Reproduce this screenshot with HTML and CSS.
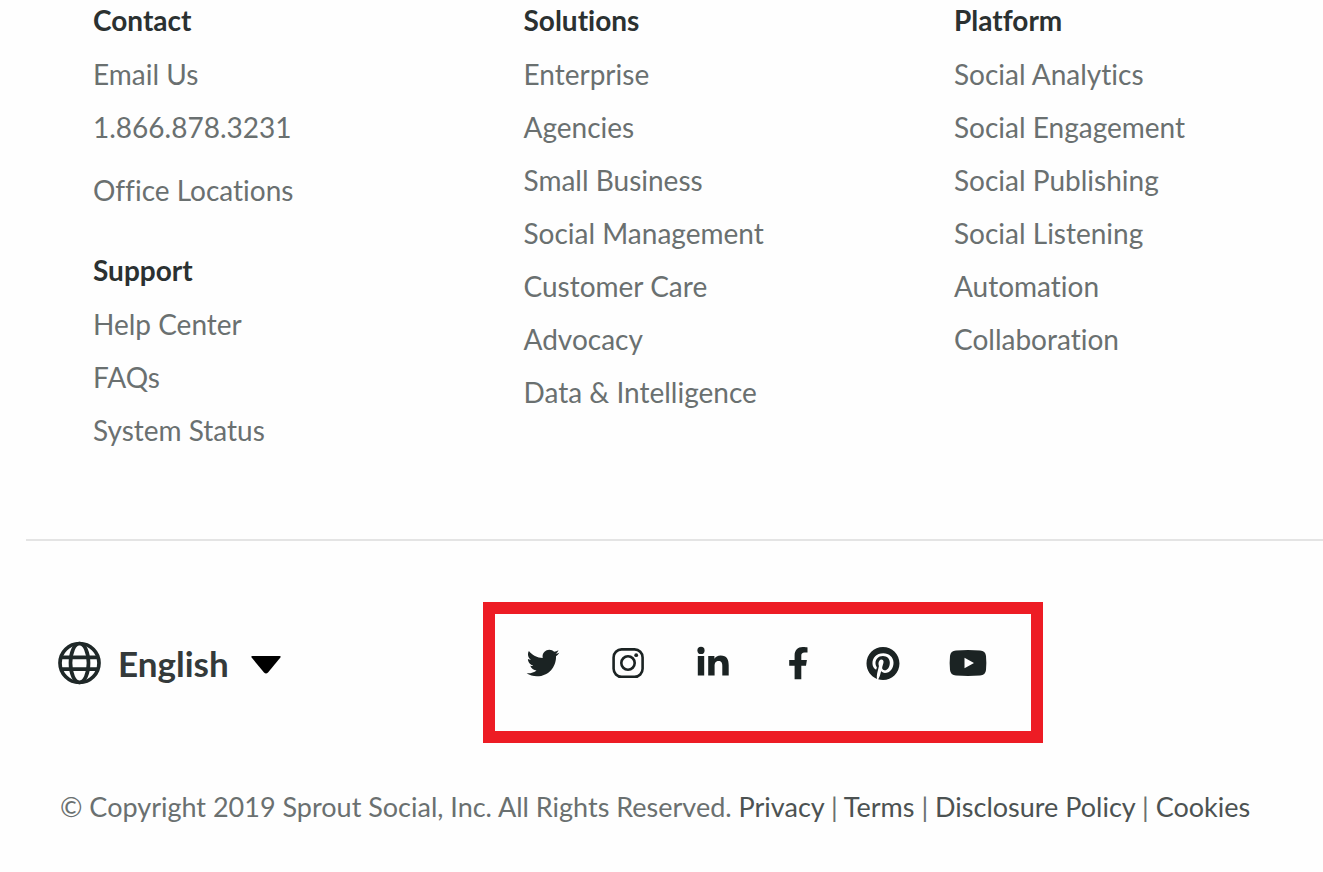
FILE: index.html
```html
<!DOCTYPE html>
<html lang="en">
<head>
<meta charset="utf-8">
<meta name="viewport" content="width=device-width, initial-scale=1">
<title>Sprout Social</title>
<link rel="stylesheet" href="styles.css">
</head>
<body>
<footer class="footer">
  <div class="columns">
    <div class="column">
      <h2 class="heading">Contact</h2>
      <ul class="links">
        <li><a href="#">Email Us</a></li>
        <li><a href="#">1.866.878.3231</a></li>
        <li class="spaced"><a href="#">Office Locations</a></li>
      </ul>
      <h2 class="heading heading-next">Support</h2>
      <ul class="links">
        <li><a href="#">Help Center</a></li>
        <li><a href="#">FAQs</a></li>
        <li><a href="#">System Status</a></li>
      </ul>
    </div>
    <div class="column">
      <h2 class="heading">Solutions</h2>
      <ul class="links">
        <li><a href="#">Enterprise</a></li>
        <li><a href="#">Agencies</a></li>
        <li><a href="#">Small Business</a></li>
        <li><a href="#">Social Management</a></li>
        <li><a href="#">Customer Care</a></li>
        <li><a href="#">Advocacy</a></li>
        <li><a href="#">Data &amp; Intelligence</a></li>
      </ul>
    </div>
    <div class="column">
      <h2 class="heading">Platform</h2>
      <ul class="links">
        <li><a href="#">Social Analytics</a></li>
        <li><a href="#">Social Engagement</a></li>
        <li><a href="#">Social Publishing</a></li>
        <li><a href="#">Social Listening</a></li>
        <li><a href="#">Automation</a></li>
        <li><a href="#">Collaboration</a></li>
      </ul>
    </div>
  </div>

  <hr class="divider">

  <div class="tools">
    <div class="language">
      <label for="language" aria-label="Language">
        <svg class="globe" viewBox="0 0 44 44" aria-hidden="true">
          <g fill="none" stroke="currentColor" stroke-width="3.7">
            <circle cx="21.500" cy="22" r="19.5"/>
            <ellipse cx="21.500" cy="22" rx="9" ry="19.5"/>
            <path d="M4 16.300h35M4 28.200h35"/>
          </g>
        </svg>
      </label>
      <select id="language" class="language-select">
        <option>English</option>
      </select>
      <svg class="caret" viewBox="0 0 30 24" aria-hidden="true"><path d="M1.500 5h27q2 0 .7 1.800L17 21.500q-2 2-4 0L.8 6.800Q-.5 5 1.500 5z"/></svg>
    </div>

    <nav class="social" aria-label="Social media">
      <a href="#" aria-label="Twitter"><svg class="icon" viewBox="0 0 36 36"><path transform="translate(1.6 1.6) scale(.064)" d="M459.4 151.7c.3 4.5.3 9.1.3 13.6 0 138.7-105.6 298.6-298.6 298.6-59.5 0-114.7-17.2-161.1-47.1 8.4 1 16.6 1.3 25.3 1.3 49.1 0 94.2-16.6 130.3-44.8-46.1-1-84.8-31.2-98.1-72.8 6.5 1 13 1.6 19.8 1.6 9.4 0 18.8-1.3 27.6-3.6-48.1-9.7-84.1-52-84.1-103v-1.3c14 7.8 30.2 12.7 47.4 13.3-28.3-18.8-46.8-51-46.8-87.4 0-19.5 5.2-37.4 14.3-53 51.7 63.7 129.3 105.3 216.4 109.8-1.6-7.8-2.6-15.9-2.6-24 0-57.8 46.8-104.9 104.9-104.9 30.2 0 57.5 12.7 76.7 33.1 23.7-4.5 46.5-13.3 66.6-25.3-7.8 24.4-24.4 44.8-46.1 57.8 21.1-2.3 41.6-8.1 60.4-16.2-14.3 20.8-32.2 39.3-52.6 54.3z"/></svg></a>
      <a href="#" aria-label="Instagram"><svg class="icon" viewBox="0 0 36 36"><g fill="none" stroke="currentColor" stroke-width="2.6"><rect x="3.6" y="4.4" width="29" height="27.4" rx="8"/><circle cx="18" cy="18" r="6.7"/></g><circle cx="26.2" cy="10.2" r="1.9"/></svg></a>
      <a href="#" aria-label="LinkedIn"><svg class="icon" viewBox="0 0 36 36"><circle cx="6" cy="5.4" r="3.6"/><path d="M2.8 11h6.4v19.6H2.8zM13.2 11h6.2v2.7c1-1.8 3.2-3.2 6.2-3.2 6.4 0 8.1 4 8.1 9.8v10.3h-6.4v-9.2c0-2.8-.3-5.4-3.7-5.4-3.3 0-4 2.5-4 5.2v9.4h-6.4z"/></svg></a>
      <a href="#" aria-label="Facebook"><svg class="icon" viewBox="0 0 36 36"><path d="M14.6 34.2V20.7H9.2v-5.8h5.4v-4.3c0-5.6 3.2-8.6 8.1-8.6 2.3 0 4.8.4 4.8.4v5h-2.9c-2.5 0-3.3 1.4-3.3 3v4.5h5.6l-.9 5.8h-4.7v13.5z"/></svg></a>
      <a href="#" aria-label="Pinterest"><svg class="icon" viewBox="0 0 36 36"><path transform="translate(1.5 1.5) scale(.0665)" d="M496 256c0 137-111 248-248 248-25.600 0-50.200-3.900-73.400-11.100 10.100-16.500 25.200-43.500 30.800-65 3-11.600 15.400-59 15.400-59 8.100 15.400 31.700 28.500 56.800 28.500 74.800 0 128.700-68.800 128.700-154.300 0-81.900-66.900-143.200-152.900-143.200-107 0-163.900 71.800-163.900 150.100 0 36.400 19.400 81.700 50.300 96.100 4.700 2.200 7.200 1.200 8.300-3.300.8-3.400 5-20.300 6.900-28.100.6-2.500.3-4.700-1.700-7.100-10.100-12.500-18.300-35.300-18.300-56.600 0-54.700 41.400-107.600 112-107.600 60.900 0 103.600 41.500 103.600 100.900 0 67.100-33.900 113.600-78 113.600-24.300 0-42.600-20.100-36.700-44.800 7-29.500 20.500-61.300 20.500-82.600 0-19-10.200-34.900-31.400-34.900-24.900 0-44.900 25.700-44.900 60.200 0 22 7.400 36.800 7.400 36.800s-24.500 103.800-29 123.200c-5 21.400-3 51.600-.9 71.200C65.400 450.900 0 361.100 0 256 0 119 111 8 248 8s248 111 248 248z"/></svg></a>
      <a href="#" aria-label="YouTube"><svg class="icon icon-wide" viewBox="0 0 38 36"><path fill-rule="evenodd" d="M7 5.500Q19 4.600 31 5.500Q36.500 5.800 37 11Q37.700 18 37 25Q36.500 30 31 30.500Q19 31.400 7 30.500Q1.500 30 1 25Q.3 18 1 11Q1.500 5.800 7 5.500zM15.500 12.700v10.600L25 18z"/></svg></a>
    </nav>
  </div>

  <p class="legal">© Copyright 2019 Sprout Social, Inc. All Rights Reserved. <a href="#">Privacy</a> | <a href="#">Terms</a> | <a href="#">Disclosure Policy</a> | <a href="#">Cookies</a></p>
</footer>
</body>
</html>
```
FILE: styles.css
```css
* {
  box-sizing: border-box;
}

body {
  margin: 0;
  background: #fefefe;
  color: #6a7070;
  font-family: Lato, "Open Sans", sans-serif;
  font-size: 28px;
  font-variant-ligatures: no-common-ligatures;
}

a {
  color: inherit;
  text-decoration: none;
}

.columns {
  display: grid;
  grid-template-columns: 35fr 35fr 30fr;
  padding-left: 93px;
}

.heading {
  margin: 0 0 8px;
  color: #2b3131;
  font-size: 28px;
  font-weight: 700;
  line-height: 40px;
}

.heading-next {
  margin-top: 33px;
}

.links {
  margin: 0;
  padding: 0;
  list-style: none;
  line-height: 53px;
}

.spaced {
  margin-top: 10px;
}

.divider {
  height: 2px;
  margin: 82px 0 61px 26px;
  border: 0;
  background: #e4e4e4;
}

.tools {
  display: grid;
  grid-template-columns: 425fr 560fr 280fr;
  align-items: start;
  padding-left: 58px;
}

.language {
  display: flex;
  align-items: center;
  padding-top: 39px;
  color: #343a3a;
}

.globe {
  display: block;
  width: 44px;
  height: 44px;
  color: #1f2828;
}

.language-select {
  margin: 0 22px 0 16px;
  padding: 0;
  border: 0;
  appearance: none;
  background: none;
  color: inherit;
  font: 700 35px/44px Lato, "Open Sans", sans-serif;
}

.caret {
  width: 30px;
  height: 24px;
  fill: #000;
  pointer-events: none;
}

.social {
  display: grid;
  grid-template-columns: repeat(6, 1fr);
  justify-items: center;
  padding: 31px 21px 50px 5px;
  border: 12px solid #ed1c24;
  color: #1b2323;
}

.icon {
  display: block;
  width: 36px;
  height: 36px;
  fill: currentColor;
}

.icon-wide {
  width: 38px;
}

.legal {
  margin: 44px 20px 44px 60px;
  font-size: 27px;
  line-height: 40px;
}

.legal a {
  color: #4c5252;
}
```
